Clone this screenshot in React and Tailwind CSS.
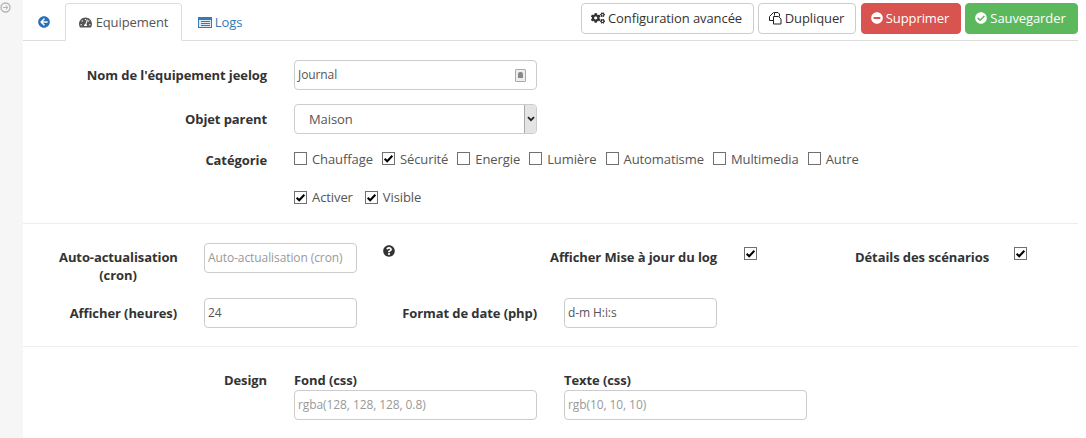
import { FaArrowCircleLeft, FaTachometerAlt, FaCogs, FaMinusCircle, FaCheckCircle, FaQuestionCircle } from "react-icons/fa"

const Check = ({ checked, label }) => (
  <label className="flex items-center gap-[5px]">
    <span className="flex h-[13px] w-[13px] items-center justify-center border border-[#707070] bg-white">
      {checked && (
        <svg viewBox="0 0 12 12" className="h-[11px] w-[11px]">
          <path d="M1.8 6.2 L4.6 9 L10.2 3" fill="none" stroke="#000" strokeWidth="2.2" />
        </svg>
      )}
    </span>
    {label && <span>{label}</span>}
  </label>
)

const Field = ({ value, placeholder, className, children }) => (
  <div className={`flex h-[30px] items-center justify-between overflow-hidden whitespace-nowrap rounded-[4px] border border-[#ccc] bg-white pl-[3px] pr-[10px] text-[12px] ${className}`}>
    <span className={placeholder ? "text-[#999]" : "text-[#555]"}>{placeholder || value}</span>
    {children}
  </div>
)

const Button = ({ className, icon, children }) => (
  <button className={`flex h-[31px] items-center justify-center gap-[3px] rounded-[4px] border pb-[2px] pr-[2px] ${className}`}>
    {icon}
    {children}
  </button>
)

const ListIcon = () => (
  <svg viewBox="0 0 14 11" className="h-[11px] w-[14px]">
    <rect width="14" height="11" fill="#337ab7" />
    <rect x="1" y="3" width="12" height="7" fill="#dfe9f3" />
    <path d="M3 4.5 H12 M3 6.5 H12 M3 8.5 H12" stroke="#337ab7" />
  </svg>
)

const CopyIcon = () => (
  <svg viewBox="0 0 14 14" className="h-[14px] w-[14px]" fill="none" stroke="#222">
    <path d="M6.5 4.5 V1.5 H10 L11.5 3 V5.5" />
    <path d="M6 9.5 H1.5 V5.5 L5.5 1.5 H6.5" />
    <path d="M5.5 13 V5.5 H10.5 L13 8 V13 Z" />
  </svg>
)

const categories = [
  ["Chauffage", false],
  ["Sécurité", true],
  ["Energie", false],
  ["Lumière", false],
  ["Automatisme", false],
  ["Multimedia", false],
  ["Autre", false],
]

const labelClass = "whitespace-nowrap text-right font-bold text-[#333]"

export default function App() {
  return (
    <div className="flex h-[438px] w-[1086px] overflow-hidden bg-white font-['Open_Sans',sans-serif] text-[13px] leading-[18px] tracking-[-0.09px] text-[#555]">
      <div className="w-[23px] shrink-0 bg-[#f6f6f6] pt-[2px]">
        <svg viewBox="0 0 11 11" className="h-[11px] w-[11px]" fill="none" stroke="#b5b5b5">
          <circle cx="5.5" cy="5.5" r="4.5" strokeWidth="1.4" />
          <path d="M3 5.5 H8 M5.8 3.5 L8 5.5 L5.8 7.5" />
        </svg>
      </div>

      <div className="w-[1055px] shrink-0">
        <div className="flex h-[41px] border-b border-[#ddd]">
          <div className="flex w-[42px] items-center justify-center pt-[3px]">
            <FaArrowCircleLeft className="text-[12px] text-[#2a6fb8]" />
          </div>
          <div className="mt-[3px] flex h-[38px] w-[117px] items-center justify-center gap-[4px] rounded-t-[4px] border border-b-white border-[#ddd] bg-white">
            <FaTachometerAlt className="text-[13px] text-[#555]" />
            Equipement
          </div>
          <div className="mt-[3px] flex h-[38px] w-[76px] items-center justify-center gap-[3px] text-[#337ab7]">
            <ListIcon />
            Logs
          </div>
          <div className="ml-auto mt-[3px] flex gap-[4px]">
            <Button className="w-[173px] border-[#ccc] bg-white text-[#333]" icon={<FaCogs className="text-[14px]" />}>Configuration avancée</Button>
            <Button className="mr-[1px] w-[98px] border-[#ccc] bg-white text-[#333]" icon={<CopyIcon />}>Dupliquer</Button>
            <Button className="w-[100px] border-[#d9534f] bg-[#d9534f] text-white" icon={<FaMinusCircle className="text-[12px]" />}>Supprimer</Button>
            <Button className="w-[113px] border-[#5cb85c] bg-[#5cb85c] text-white" icon={<FaCheckCircle className="text-[12px]" />}>Sauvegarder</Button>
          </div>
        </div>

        <div className="flex flex-col">
          <div className="mt-[19px] flex items-center">
            <div className={`w-[244px] ${labelClass}`}>Nom de l'équipement jeelog</div>
            <Field value="Journal" className="ml-[27px] w-[243px]">
              <span className="flex h-[13px] w-[11px] items-center justify-center rounded-[1px] border border-[#aaa] bg-[#eee]">
                <span className="h-[6px] w-[5px] rounded-t-[2px] bg-[#888]" />
              </span>
            </Field>
          </div>

          <div className="mt-[14px] flex items-center">
            <div className={`w-[244px] ${labelClass}`}>Objet parent</div>
            <div className="ml-[27px] flex h-[30px] w-[243px] items-stretch justify-between rounded-[4px] border border-[#ccc] bg-white">
              <span className="self-center pl-[14px]">Maison</span>
              <span className="flex w-[12px] items-center justify-center rounded-r-[3px] border-l border-[#aaa] bg-[#e4e4e4]">
                <svg viewBox="0 0 8 6" className="h-[6px] w-[8px]">
                  <path d="M1 1.2 L4 4.2 L7 1.2" fill="none" stroke="#222" strokeWidth="1.8" />
                </svg>
              </span>
            </div>
          </div>

          <div className="mt-[14px] flex items-center">
            <div className={`w-[244px] pt-[3px] ${labelClass}`}>Catégorie</div>
            <div className="ml-[27px] flex gap-[9px]">
              {categories.map(([label, checked]) => (
                <Check key={label} label={label} checked={checked} />
              ))}
            </div>
          </div>

          <div className="ml-[271px] mt-[19px] flex gap-[12px]">
            <Check label="Activer" checked />
            <Check label="Visible" checked />
          </div>

          <div className="mt-[17px] border-t border-[#eee]" />

          <div className="mt-[19px] flex items-start">
            <div className="w-[154px] whitespace-nowrap pl-[36px] pt-[5px] text-center font-bold text-[#333]">
              Auto-actualisation
              <br />
              (cron)
            </div>
            <Field placeholder="Auto-actualisation (cron)" className="ml-[27px] w-[153px]" />
            <FaQuestionCircle className="ml-[26px] mt-[2px] text-[12px] text-[#333]" />
            <div className={`ml-[155px] w-[167px] pt-[5px] ${labelClass}`}>Afficher Mise à jour du log</div>
            <div className="ml-[27px] pt-[4px]"><Check checked /></div>
            <div className={`ml-[98px] w-[132px] pt-[5px] ${labelClass}`}>Détails des scénarios</div>
            <div className="ml-[27px] pt-[4px]"><Check checked /></div>
          </div>

          <div className="mt-[14px] flex items-center">
            <div className={`w-[154px] ${labelClass}`}>Afficher (heures)</div>
            <Field value="24" className="ml-[27px] w-[153px]" />
            <div className={`w-[180px] ${labelClass}`}>Format de date (php)</div>
            <Field value="d-m H:i:s" className="ml-[27px] w-[153px]" />
          </div>

          <div className="mt-[18px] border-t border-[#eee]" />

          <div className="mt-[24px] flex items-start">
            <div className={`w-[244px] ${labelClass}`}>Design</div>
            <div className="ml-[27px] w-[243px]">
              <div className="mb-[1px] font-bold text-[#333]">Fond (css)</div>
              <Field placeholder="rgba(128, 128, 128, 0.8)" />
            </div>
            <div className="ml-[27px] w-[243px]">
              <div className="mb-[1px] font-bold text-[#333]">Texte (css)</div>
              <Field placeholder="rgb(10, 10, 10)" />
            </div>
          </div>
        </div>
      </div>
    </div>
  )
}
